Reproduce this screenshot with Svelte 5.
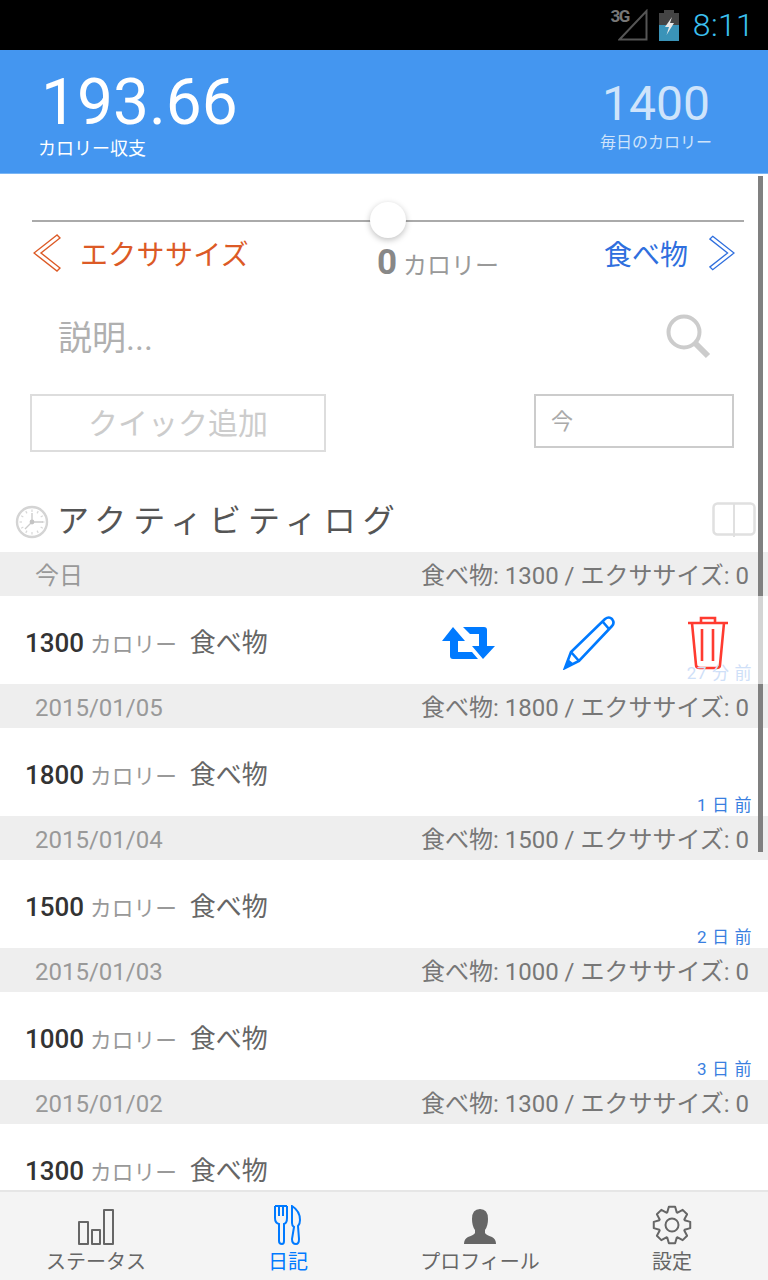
<script>
  const days = [
    { date: '今日', food: 1300, ago: '27 分 前', actions: true },
    { date: '2015/01/05', food: 1800, ago: '1 日 前' },
    { date: '2015/01/04', food: 1500, ago: '2 日 前' },
    { date: '2015/01/03', food: 1000, ago: '3 日 前' },
    { date: '2015/01/02', food: 1300, ago: '' }
  ];

  // 12 tick marks round the clock face
  const ticks = Array.from({ length: 12 }, (_, i) => i * 30);

  // 8 tooth gear outline
  function gearPath() {
    const pts = [];
    for (let i = 0; i < 8; i++) {
      const a = (i * Math.PI) / 4;
      for (const [off, r] of [[-0.36, 13.5], [-0.17, 18.5], [0.17, 18.5], [0.36, 13.5]]) {
        pts.push(`${(Math.sin(a + off) * r).toFixed(2)} ${(-Math.cos(a + off) * r).toFixed(2)}`);
      }
    }
    return 'M' + pts.join(' L') + ' Z';
  }
</script>

<div class="phone">
  <div class="status">
    <span class="net">3G</span>
    <svg width="30" height="32" viewBox="0 0 30 32">
      <path d="M1.5 30.5 L28.5 2 V30.5 Z" fill="none" stroke="#555" stroke-width="2" />
    </svg>
    <svg class="battery" width="22" height="31" viewBox="0 0 22 31">
      <rect x="6" y="0" width="10" height="3" fill="#444" />
      <rect x="1" y="3" width="20" height="28" fill="#444" />
      <rect x="1" y="15" width="20" height="16" fill="#3a93b8" />
      <path d="M14 7 L7 17 H11 L8.5 25 L16 13 H12 Z" fill="#e8e8e8" />
    </svg>
    <span class="clock">8:11</span>
  </div>

  <header>
    <div class="balance">
      <div class="big">193.66</div>
      <div class="cap">カロリー収支</div>
    </div>
    <div class="daily">
      <div class="num">1400</div>
      <div class="cap2">毎日のカロリー</div>
    </div>
  </header>

  <main>
    <div class="slider"><span class="thumb"></span></div>

    <div class="chooser">
      <svg width="28" height="38" viewBox="0 0 28 38">
        <path d="M24 1 L1 19 L24 37 L27 34 L8 19 L27 4 Z" fill="none" stroke="#dc5a26" stroke-width="1.4" />
      </svg>
      <span class="ex">エクササイズ</span>
      <span class="zero"><b>0</b> カロリー</span>
      <span class="food">食べ物</span>
      <svg width="26" height="38" viewBox="0 0 28 38">
        <path d="M4 1 L27 19 L4 37 L1 34 L20 19 L1 4 Z" fill="none" stroke="#2f6fde" stroke-width="1.4" />
      </svg>
    </div>

    <div class="search">
      <span>説明...</span>
      <svg width="46" height="46" viewBox="0 0 46 46">
        <circle cx="19" cy="19" r="15.5" fill="none" stroke="#ccc" stroke-width="4" />
        <path d="M30 30 L43 43" stroke="#ccc" stroke-width="6" />
      </svg>
    </div>

    <div class="quick">
      <div class="add">クイック追加</div>
      <div class="now">今</div>
    </div>

    <div class="logtitle">
      <svg class="clockface" width="34" height="34" viewBox="0 0 34 34">
        <circle cx="17" cy="17" r="15" fill="none" stroke="#d4d4d4" stroke-width="2.4" />
        {#each ticks as t}
          <path d="M17 4.5 V7" stroke="#d8d8d8" stroke-width="1.2" transform="rotate({t} 17 17)" />
        {/each}
        <path d="M17 8 V17 H28 M17 17 L10 24" fill="none" stroke="#ccc" stroke-width="1.4" />
        <circle cx="17" cy="17" r="2.4" fill="#c4c4c4" />
      </svg>
      <h2>アクティビティログ</h2>
      <svg class="book" width="44" height="36" viewBox="0 0 44 36">
        <rect x="1.5" y="1.5" width="41" height="31" rx="4" fill="none" stroke="#e0e0e0" stroke-width="2.5" />
        <path d="M22 1 V35" stroke="#e0e0e0" stroke-width="2" />
      </svg>
    </div>

    {#each days as d}
      <div class="dayhead">
        <span class="date">{d.date}</span>
        <span class="sum">食べ物: {d.food} / エクササイズ: 0</span>
      </div>
      <div class="row">
        <div class="entry">
          <b>{d.food}</b>
          <span class="unit">カロリー</span>
          <span class="kind">食べ物</span>
        </div>
        {#if d.actions}
          <div class="actions">
            <svg class="swap" width="54" height="34" viewBox="0 0 54 34">
              <path d="M11 1 L23 15 H16 V26 H30 L36 33 H11 Q8 33 8 30 V15 H0 Z" fill="#007aff" />
              <path d="M41 33 L30 20 H37 V8 H28 L21 1 H42 Q45 1 45 4 V20 H53 Z" fill="#007aff" />
            </svg>
            <svg class="pen" width="54" height="54" viewBox="0 0 54 54">
              <path d="M3 52 L9 36 L43 3 Q47 0 50 3 Q53 7 50 10 L17 45 Z M9 36 L17 45 M41 6 L47 13" fill="none" stroke="#007aff" stroke-width="2.6" />
              <path d="M3 52 L6 43 L12 48 Z" fill="#007aff" />
            </svg>
            <svg width="42" height="54" viewBox="0 0 42 54">
              <path d="M1 7 H41 M14 7 V2 H28 V7 M5 7 L9 49 Q9 52 13 52 H29 Q33 52 33 49 L37 7 M15 13 V45 M26 13 V45" fill="none" stroke="#ff3b30" stroke-width="2.6" />
            </svg>
          </div>
        {/if}
        <span class="ago" class:faded={d.actions}>{d.ago}</span>
      </div>
    {/each}

    <div class="bar"></div>
    <div class="bar lit"></div>
    <div class="bar low"></div>
  </main>

  <nav>
    <div class="tab">
      <svg width="36" height="36" viewBox="0 0 36 36">
        <path d="M1 13 H10 V35 H1 Z M14 21 H22 V35 H14 Z M26 1 H35 V35 H26 Z" fill="none" stroke="#666" stroke-width="2" stroke-linejoin="round" />
      </svg>
      <span>ステータス</span>
    </div>
    <div class="tab on">
      <svg width="28" height="40" viewBox="0 0 28 40">
        <path d="M1 1 V13 Q1 18 5 19 L5 36 Q5 39 8 39 Q10 39 10 36 V19 Q13 18 13 13 V1 M1 1 H13 M5 1 V11 M9 1 V11" fill="none" stroke="#007aff" stroke-width="2" />
        <path d="M18 1 Q26 6 26 15 Q26 19 24 21 L25 34 Q25 39 22 39 Q18 39 18 34 L20 22 Q18 21 18 18 Z" fill="none" stroke="#007aff" stroke-width="2" />
      </svg>
      <span>日記</span>
    </div>
    <div class="tab">
      <svg width="34" height="36" viewBox="0 0 34 36">
        <path d="M17 0 Q25 0 25 10 Q25 17 22 21 V24 Q23 26 29 28 Q33 30 33 35 H1 Q1 30 5 28 Q11 26 12 24 V21 Q9 17 9 10 Q9 0 17 0 Z" fill="#666" />
      </svg>
      <span>プロフィール</span>
    </div>
    <div class="tab">
      <svg width="40" height="40" viewBox="-20 -20 40 40">
        <g fill="none" stroke="#666" stroke-width="2" stroke-linejoin="round">
          <circle r="6.5" />
          <path d={gearPath()} />
        </g>
      </svg>
      <span>設定</span>
    </div>
  </nav>
</div>

<style>
  :global(body) {
    background: #fff;
  }

  .phone {
    width: 768px;
    height: 1280px;
    display: flex;
    flex-direction: column;
    overflow: hidden;
    font-family: Roboto, "Noto Sans CJK JP", sans-serif;
  }

  .status {
    height: 50px;
    flex: none;
    background: #000;
    display: flex;
    align-items: center;
    justify-content: flex-end;
    padding-right: 14px;
    box-sizing: border-box;
  }

  .net {
    font-size: 17px;
    font-weight: 700;
    line-height: 17px;
    letter-spacing: -1.5px;
    color: #777;
    align-self: flex-start;
    margin: 8px -11px 0 0;
  }

  .battery {
    margin-left: 10px;
  }

  .clock {
    font-size: 32px;
    font-weight: 300;
    letter-spacing: 0.3px;
    color: #3cc0f0;
    margin-left: 13px;
    line-height: 50px;
  }

  header {
    height: 124px;
    flex: none;
    box-sizing: border-box;
    background: #4496f0;
    border-bottom: 1px solid #7ab6f5;
    display: flex;
    justify-content: space-between;
    padding: 0 56px 0 38px;
  }

  .big {
    font-size: 64px;
    color: #fff;
    line-height: 76px;
    margin: 15px 0 0 3px;
  }

  .cap {
    font-size: 18px;
    color: #fff;
    line-height: 24px;
    margin-top: -4px;
  }

  .daily {
    text-align: center;
  }

  .num {
    font-size: 48px;
    color: #cfe4fb;
    line-height: 60px;
    margin-top: 24px;
  }

  .cap2 {
    font-size: 16px;
    color: #cfe4fb;
    line-height: 22px;
    margin-top: -2px;
  }

  main {
    flex: 1;
    min-height: 0;
    position: relative;
    overflow: hidden;
  }

  .slider {
    height: 2px;
    margin: 46px 24px 0 32px;
    background: #aaa;
    position: relative;
  }

  .thumb {
    position: absolute;
    left: 338px;
    top: -18px;
    width: 36px;
    height: 36px;
    border-radius: 50%;
    background: #fff;
    box-shadow: 0 2px 6px rgba(0, 0, 0, 0.25);
  }

  .chooser {
    display: flex;
    align-items: center;
    height: 38px;
    margin-top: 12px;
    padding: 0 33px;
  }

  .ex {
    font-size: 28px;
    letter-spacing: 0.3px;
    color: #dc5a26;
    margin-left: 19px;
  }

  .zero {
    flex: 1;
    font-size: 24px;
    color: #999;
    margin-left: 128px;
    padding-top: 18px;
  }

  .zero b {
    font-size: 35px;
    color: #888;
  }

  .food {
    font-size: 28px;
    color: #2f6fde;
    margin-right: 21px;
  }

  .search {
    display: flex;
    justify-content: space-between;
    align-items: center;
    height: 46px;
    margin-top: 41px;
    padding: 0 57px 0 58px;
    font-size: 34px;
    color: #b0b0b0;
  }

  .search span {
    margin-bottom: 2px;
  }

  .quick {
    display: flex;
    justify-content: space-between;
    align-items: flex-start;
    margin-top: 35px;
    padding: 0 34px 0 30px;
  }

  .add {
    width: 296px;
    height: 58px;
    box-sizing: border-box;
    border: 2px solid #ddd;
    color: #ccc;
    font-size: 30px;
    line-height: 56px;
    text-align: center;
  }

  .now {
    width: 200px;
    height: 54px;
    box-sizing: border-box;
    border: 2px solid #ccc;
    color: #aaa;
    font-size: 22px;
    line-height: 52px;
    padding-left: 15px;
  }

  .logtitle {
    display: flex;
    align-items: center;
    height: 66px;
    margin-top: 34px;
    padding: 0 12px 0 15px;
  }

  .clockface {
    margin-top: 6px;
  }

  .book {
    margin-top: 2px;
  }

  h2 {
    flex: 1;
    margin: 0 0 2px 8px;
    font-size: 32px;
    font-weight: 400;
    color: #555;
    letter-spacing: 6.9px;
  }

  .dayhead {
    height: 44px;
    box-sizing: border-box;
    line-height: 44px;
    background: #eee;
    display: flex;
    justify-content: space-between;
    align-items: baseline;
    overflow: hidden;
    padding: 2px 19px 0 35px;
    font-size: 24px;
  }

  .date {
    color: #999;
  }

  .sum {
    color: #777;
  }

  .row {
    height: 88px;
    box-sizing: border-box;
    display: flex;
    align-items: center;
    padding: 10px 0 0 25px;
    position: relative;
    background: #fff;
  }

  .entry {
    line-height: 40px;
  }

  .entry b {
    font-size: 26px;
    font-weight: 500;
    color: #333;
  }

  .unit {
    font-size: 21.7px;
    color: #999;
    margin-left: 2px;
  }

  .kind {
    font-size: 26px;
    color: #666;
    margin-left: 9px;
  }

  .actions {
    position: absolute;
    left: 442px;
    top: 20px;
    display: flex;
    align-items: center;
  }

  .swap {
    margin-right: 66px;
  }

  .pen {
    margin-right: 71px;
  }

  .ago {
    position: absolute;
    right: 16px;
    bottom: 0;
    font-size: 17px;
    line-height: 22px;
    color: #3a7fe0;
    letter-spacing: 0.6px;
  }

  .ago.faded {
    color: #cfe0f8;
  }

  .bar {
    position: absolute;
    right: 5px;
    top: 2px;
    width: 5px;
    height: 420px;
    background: #808080;
  }

  .bar.lit {
    top: 422px;
    height: 88px;
    background: #d4d4d4;
  }

  .bar.low {
    top: 510px;
    height: 168px;
  }

  nav {
    height: 90px;
    flex: none;
    box-sizing: border-box;
    background: #f4f4f4;
    border-top: 2px solid #e6e6e6;
    display: grid;
    grid-template-columns: repeat(4, 1fr);
  }

  .tab {
    display: flex;
    flex-direction: column;
    align-items: center;
    justify-content: flex-end;
    color: #666;
    font-size: 20px;
    line-height: 30px;
    padding-bottom: 3px;
  }

  .tab svg {
    margin-bottom: 2px;
  }

  .tab.on {
    color: #007aff;
  }
</style>
